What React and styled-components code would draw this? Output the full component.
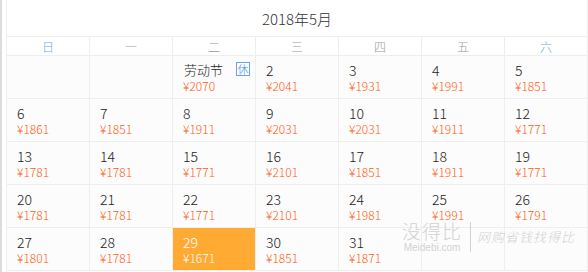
import React from "react";
import styled, { createGlobalStyle } from "styled-components";

const GlobalStyle = createGlobalStyle`
  html, body {
    margin: 0;
    padding: 0;
    background: #ffffff;
    font-family: "Noto Sans CJK SC", "Noto Sans", sans-serif;
  }
`;

const Page = styled.div`
  display: flex;
  width: 588px;
  height: 272px;
  overflow: hidden;
  position: relative;
`;

const Strip = styled.div`
  width: 2px;
  background: #dcdcdc;
  margin-right: 4px;
`;

const Calendar = styled.div`
  width: 582px;
  box-sizing: border-box;
  border-left: 1px solid #eeeeee;
  border-right: 1px solid #eeeeee;
`;

const Title = styled.div`
  height: 36px;
  border-bottom: 1px solid #eeeeee;
  display: flex;
  align-items: center;
  justify-content: center;
  font-size: 15px;
  font-weight: 300;
  color: #333333;
`;

const Grid = styled.div`
  display: grid;
  grid-template-columns: repeat(7, 82px);
  column-gap: 1px;
  background: #eeeeee;
  row-gap: 1px;
  padding-bottom: 1px;
`;

const WeekDay = styled.div`
  height: 18px;
  background: #ffffff;
  display: flex;
  align-items: center;
  justify-content: center;
  font-size: 12px;
  font-weight: 300;
  color: ${(p) => (p.$weekend ? "#6aa8ea" : "#999999")};
`;

const Cell = styled.div`
  height: 42px;
  box-sizing: border-box;
  padding: 6px 5px 0 10px;
  background: ${(p) => (p.$active ? "#ffaa33" : "#fcfcfc")};
`;

const Top = styled.div`
  display: flex;
  align-items: center;
  justify-content: space-between;
  height: 16px;
  line-height: 16px;
  font-size: 14px;
  font-weight: 300;
  color: ${(p) => (p.$active ? "#ffffff" : "#222222")};
`;

const Holiday = styled.span`
  font-size: 13px;
  margin-left: 1px;
`;

const Badge = styled.span`
  width: 14px;
  height: 14px;
  box-sizing: border-box;
  border: 1px solid #6aa2ef;
  color: #4f90ea;
  font-size: 11px;
  line-height: 12px;
  text-align: center;
  margin-top: -2px;
`;

const Price = styled.div`
  height: 16px;
  line-height: 16px;
  font-size: 12px;
  font-weight: 300;
  color: ${(p) => (p.$active ? "#ffffff" : "#ff5a10")};
`;

const Watermark = styled.div`
  position: absolute;
  left: 402px;
  top: 220px;
  display: flex;
  align-items: center;
  color: #d2d2d2;
  font-weight: 300;
  pointer-events: none;
`;

const MarkLogo = styled.div`
  display: flex;
  flex-direction: column;
  align-items: center;
`;

const MarkName = styled.div`
  font-size: 19px;
  line-height: 22px;
  letter-spacing: 1px;
`;

const MarkSite = styled.div`
  font-family: "Liberation Sans", sans-serif;
  font-size: 10px;
  line-height: 11px;
`;

const MarkLine = styled.div`
  width: 1px;
  height: 30px;
  background: #d2d2d2;
  margin: 0 6px 0 8px;
`;

const MarkSlogan = styled.div`
  font-size: 13px;
  font-style: italic;
  letter-spacing: 1px;
`;

const weekDays = ["日", "一", "二", "三", "四", "五", "六"];

const prices = {
  1: 2070, 2: 2041, 3: 1931, 4: 1991, 5: 1851,
  6: 1861, 7: 1851, 8: 1911, 9: 2031, 10: 2031, 11: 1911, 12: 1771,
  13: 1781, 14: 1781, 15: 1771, 16: 2101, 17: 1851, 18: 1911, 19: 1771,
  20: 1781, 21: 1781, 22: 1771, 23: 2101, 24: 1981, 25: 1991, 26: 1791,
  27: 1801, 28: 1781, 29: 1671, 30: 1851, 31: 1871,
};

const cells = [null, null];
for (let d = 1; d <= 31; d++) cells.push(d);
cells.push(null, null);

const App = () => {
  return (
    <Page>
      <GlobalStyle />
      <Strip />
      <Calendar>
        <Title>2018年5月</Title>
        <Grid>
          {weekDays.map((w, i) => (
            <WeekDay key={w} $weekend={i === 0 || i === 6}>
              {w}
            </WeekDay>
          ))}
          {cells.map((d, i) => {
            if (!d) return <Cell key={"e" + i} />;
            const active = d === 29;
            return (
              <Cell key={d} $active={active}>
                <Top $active={active}>
                  {d === 1 ? (
                    <>
                      <Holiday>劳动节</Holiday>
                      <Badge>休</Badge>
                    </>
                  ) : (
                    d
                  )}
                </Top>
                <Price $active={active}>¥{prices[d]}</Price>
              </Cell>
            );
          })}
        </Grid>
      </Calendar>
      <Watermark>
        <MarkLogo>
          <MarkName>没得比</MarkName>
          <MarkSite>Meidebi.com</MarkSite>
        </MarkLogo>
        <MarkLine />
        <MarkSlogan>网购省钱找得比</MarkSlogan>
      </Watermark>
    </Page>
  );
};

export default App;
